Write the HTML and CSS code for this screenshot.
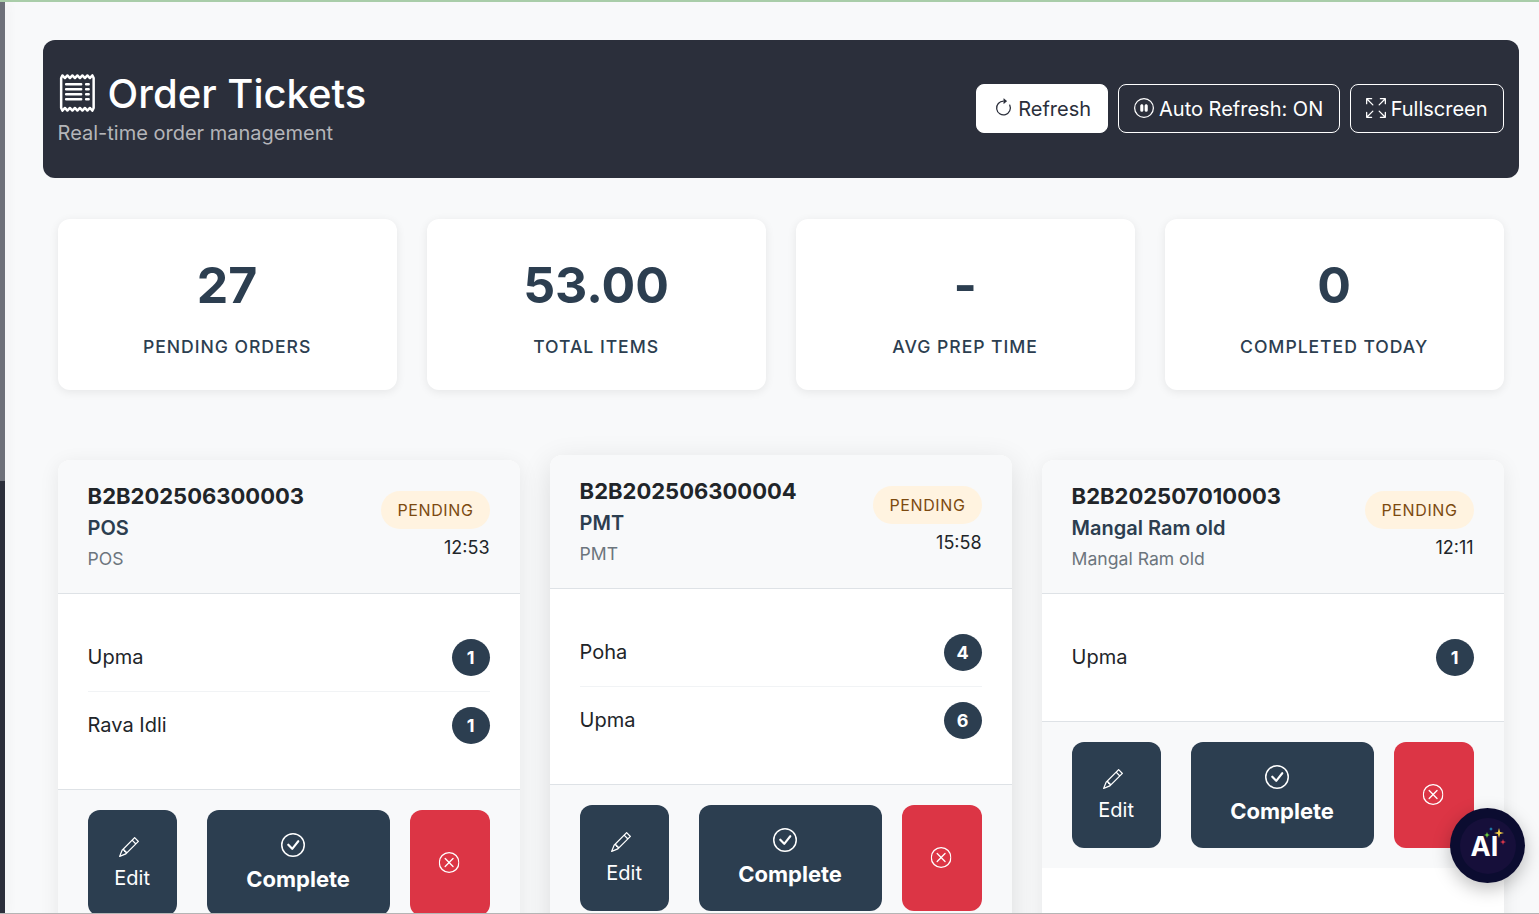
FILE: index.html
```html
<!DOCTYPE html>
<html lang="en">
<head>
<meta charset="utf-8">
<title>Order Tickets</title>
<link rel="stylesheet" href="styles.css">
</head>
<body>
<svg class="defs" width="0" height="0" aria-hidden="true">
  <symbol id="i-pencil" viewBox="0 0 16 16"><path d="M12.146.146a.5.5 0 0 1 .708 0l3 3a.5.5 0 0 1 0 .708l-10 10a.5.5 0 0 1-.168.11l-5 2a.5.5 0 0 1-.65-.65l2-5a.5.5 0 0 1 .11-.168l10-10zM11.207 2.5 13.5 4.793 14.793 3.5 12.5 1.207 11.207 2.5zm1.586 3L10.5 3.207 4 9.707V10h.5a.5.5 0 0 1 .5.5v.5h.5a.5.5 0 0 1 .5.5v.5h.293l6.5-6.5zm-9.761 5.175-.106.106-1.528 3.821 3.821-1.528.106-.106A.5.5 0 0 1 5 12.5V12h-.5a.5.5 0 0 1-.5-.5V11h-.5a.5.5 0 0 1-.468-.325z"/></symbol>
  <symbol id="i-check" viewBox="0 0 16 16"><path d="M8 15A7 7 0 1 1 8 1a7 7 0 0 1 0 14zm0 1A8 8 0 1 0 8 0a8 8 0 0 0 0 16z"/><path d="M10.970 4.970a.235.235 0 0 0-.02.022L7.477 9.417 5.384 7.323a.75.75 0 0 0-1.060 1.060L6.970 11.030a.75.75 0 0 0 1.079-.02l3.992-4.990a.75.75 0 0 0-1.071-1.050z"/></symbol>
  <symbol id="i-x" viewBox="0 0 16 16"><path d="M8 15A7 7 0 1 1 8 1a7 7 0 0 1 0 14zm0 1A8 8 0 1 0 8 0a8 8 0 0 0 0 16z"/><path d="M4.646 4.646a.5.5 0 0 1 .708 0L8 7.293l2.646-2.647a.5.5 0 0 1 .708.708L8.707 8l2.647 2.646a.5.5 0 0 1-.708.708L8 8.707l-2.646 2.647a.5.5 0 0 1-.708-.708L7.293 8 4.646 5.354a.5.5 0 0 1 0-.708z"/></symbol>
</svg>
<div class="topline"></div>
<div class="frame">
  <div class="strip"><div class="strip-top"></div><div class="strip-bottom"></div></div>
  <main class="main">
    <header class="hero">
      <div class="hero-text">
        <h1 class="hero-title">
          <svg class="hero-icon" viewBox="0 0 16 16"><path d="M1.920.506a.5.5 0 0 1 .434.14L3 1.293l.646-.647a.5.5 0 0 1 .708 0L5 1.293l.646-.647a.5.5 0 0 1 .708 0L7 1.293l.646-.647a.5.5 0 0 1 .708 0L9 1.293l.646-.647a.5.5 0 0 1 .708 0l.646.647.646-.647a.5.5 0 0 1 .708 0l.646.647.646-.647a.5.5 0 0 1 .801.13l.5 1A.5.5 0 0 1 15 2v12a.5.5 0 0 1-.053.224l-.5 1a.5.5 0 0 1-.8.13L13 14.707l-.646.647a.5.5 0 0 1-.708 0L11 14.707l-.646.647a.5.5 0 0 1-.708 0L9 14.707l-.646.647a.5.5 0 0 1-.708 0L7 14.707l-.646.647a.5.5 0 0 1-.708 0L5 14.707l-.646.647a.5.5 0 0 1-.708 0L3 14.707l-.646.647a.5.5 0 0 1-.801-.13l-.5-1A.5.5 0 0 1 1 14V2a.5.5 0 0 1 .053-.224l.5-1a.5.5 0 0 1 .367-.27zm.217 1.338L2 2.118v11.764l.137.274.51-.51a.5.5 0 0 1 .707 0l.646.647.646-.646a.5.5 0 0 1 .708 0l.646.646.646-.646a.5.5 0 0 1 .708 0l.646.646.646-.646a.5.5 0 0 1 .708 0l.646.646.646-.646a.5.5 0 0 1 .708 0l.646.646.646-.646a.5.5 0 0 1 .708 0l.509.509.137-.274V2.118l-.137-.274-.51.51a.5.5 0 0 1-.707 0L12 1.707l-.646.647a.5.5 0 0 1-.708 0L10 1.707l-.646.647a.5.5 0 0 1-.708 0L8 1.707l-.646.647a.5.5 0 0 1-.708 0L6 1.707l-.646.647a.5.5 0 0 1-.708 0L4 1.707l-.646.647a.5.5 0 0 1-.708 0l-.509-.51z"/><path d="M3 4.500a.5.5 0 0 1 .5-.5h6a.5.5 0 1 1 0 1h-6a.5.5 0 0 1-.5-.5zm0 2a.5.5 0 0 1 .5-.5h6a.5.5 0 1 1 0 1h-6a.5.5 0 0 1-.5-.5zm0 2a.5.5 0 0 1 .5-.5h6a.5.5 0 1 1 0 1h-6a.5.5 0 0 1-.5-.5zm0 2a.5.5 0 0 1 .5-.5h6a.5.5 0 0 1 0 1h-6a.5.5 0 0 1-.5-.5zm8-6a.5.5 0 0 1 .5-.5h1a.5.5 0 0 1 0 1h-1a.5.5 0 0 1-.5-.5zm0 2a.5.5 0 0 1 .5-.5h1a.5.5 0 0 1 0 1h-1a.5.5 0 0 1-.5-.5zm0 2a.5.5 0 0 1 .5-.5h1a.5.5 0 0 1 0 1h-1a.5.5 0 0 1-.5-.5zm0 2a.5.5 0 0 1 .5-.5h1a.5.5 0 0 1 0 1h-1a.5.5 0 0 1-.5-.5z"/></svg>
          <span>Order Tickets</span>
        </h1>
        <p class="hero-sub">Real-time order management</p>
      </div>
      <div class="hero-actions">
        <button class="hbtn hbtn-light"><svg class="hbtn-icon hbtn-icon-refresh" viewBox="0 0 16 16"><path fill-rule="evenodd" d="M8 3a5 5 0 1 0 4.546 2.914.5.5 0 0 1 .908-.417A6 6 0 1 1 8 2v1z"/><path d="M8 4.466V.534a.25.25 0 0 1 .41-.192l2.360 1.966c.12.1.12.284 0 .384L8.410 4.658A.25.25 0 0 1 8 4.466z"/></svg><span>Refresh</span></button>
        <button class="hbtn hbtn-outline hbtn-auto"><svg class="hbtn-icon" viewBox="0 0 16 16"><path d="M8 15A7 7 0 1 1 8 1a7 7 0 0 1 0 14zm0 1A8 8 0 1 0 8 0a8 8 0 0 0 0 16z"/><path d="M6.250 5C5.560 5 5 5.560 5 6.250v3.500a1.250 1.250 0 1 0 2.500 0v-3.500C7.500 5.560 6.940 5 6.250 5zm3.500 0c-.69 0-1.250.56-1.250 1.250v3.500a1.250 1.250 0 1 0 2.500 0v-3.500C11 5.560 10.440 5 9.750 5z"/></svg><span>Auto Refresh: ON</span></button>
        <button class="hbtn hbtn-outline hbtn-full"><svg class="hbtn-icon" viewBox="0 0 16 16"><path fill-rule="evenodd" d="M5.828 10.172a.5.5 0 0 0-.707 0l-4.096 4.096V11.500a.5.5 0 0 0-1 0v3.975a.5.5 0 0 0 .5.5H4.500a.5.5 0 0 0 0-1H1.732l4.096-4.096a.5.5 0 0 0 0-.707zm4.344 0a.5.5 0 0 1 .707 0l4.096 4.096V11.500a.5.5 0 1 1 1 0v3.975a.5.5 0 0 1-.5.5H11.500a.5.5 0 0 1 0-1h2.768l-4.096-4.096a.5.5 0 0 1 0-.707zm0-4.344a.5.5 0 0 0 .707 0l4.096-4.096V4.500a.5.5 0 1 0 1 0V.525a.5.5 0 0 0-.5-.5H11.500a.5.5 0 0 0 0 1h2.768l-4.096 4.096a.5.5 0 0 0 0 .707zm-4.344 0a.5.5 0 0 1-.707 0L1.025 1.732V4.500a.5.5 0 0 1-1 0V.525a.5.5 0 0 1 .5-.5H4.500a.5.5 0 0 1 0 1H1.732l4.096 4.096a.5.5 0 0 1 0 .707z"/></svg><span>Fullscreen</span></button>
      </div>
    </header>

    <section class="stats">
      <div class="stat"><div class="stat-num">27</div><div class="stat-label">Pending Orders</div></div>
      <div class="stat"><div class="stat-num">53.00</div><div class="stat-label">Total Items</div></div>
      <div class="stat"><div class="stat-num">-</div><div class="stat-label">Avg Prep Time</div></div>
      <div class="stat"><div class="stat-num">0</div><div class="stat-label">Completed Today</div></div>
    </section>

    <section class="tickets">
      <article class="ticket">
        <div class="ticket-head">
          <div class="ticket-info">
            <div class="ticket-id">B2B202506300003</div>
            <div class="ticket-customer">POS</div>
            <div class="ticket-source">POS</div>
          </div>
          <div class="ticket-meta"><span class="pill">PENDING</span><span class="time">12:53</span></div>
        </div>
        <div class="ticket-body">
          <div class="item"><span class="item-name">Upma</span><span class="qty">1</span></div>
          <div class="item"><span class="item-name">Rava Idli</span><span class="qty">1</span></div>
        </div>
        <div class="ticket-foot">
          <button class="act act-edit"><svg class="act-icon act-icon-edit"><use href="#i-pencil"/></svg><span class="act-text">Edit</span></button>
          <button class="act act-done"><svg class="act-icon act-icon-done"><use href="#i-check"/></svg><span class="act-text">Complete</span></button>
          <button class="act act-del" aria-label="Cancel"><svg class="act-icon act-icon-del"><use href="#i-x"/></svg></button>
        </div>
      </article>

      <article class="ticket ticket-raised">
        <div class="ticket-head">
          <div class="ticket-info">
            <div class="ticket-id">B2B202506300004</div>
            <div class="ticket-customer">PMT</div>
            <div class="ticket-source">PMT</div>
          </div>
          <div class="ticket-meta"><span class="pill">PENDING</span><span class="time">15:58</span></div>
        </div>
        <div class="ticket-body">
          <div class="item"><span class="item-name">Poha</span><span class="qty">4</span></div>
          <div class="item"><span class="item-name">Upma</span><span class="qty">6</span></div>
        </div>
        <div class="ticket-foot">
          <button class="act act-edit"><svg class="act-icon act-icon-edit"><use href="#i-pencil"/></svg><span class="act-text">Edit</span></button>
          <button class="act act-done"><svg class="act-icon act-icon-done"><use href="#i-check"/></svg><span class="act-text">Complete</span></button>
          <button class="act act-del" aria-label="Cancel"><svg class="act-icon act-icon-del"><use href="#i-x"/></svg></button>
        </div>
      </article>

      <article class="ticket">
        <div class="ticket-head">
          <div class="ticket-info">
            <div class="ticket-id">B2B202507010003</div>
            <div class="ticket-customer">Mangal Ram old</div>
            <div class="ticket-source">Mangal Ram old</div>
          </div>
          <div class="ticket-meta"><span class="pill">PENDING</span><span class="time">12:11</span></div>
        </div>
        <div class="ticket-body">
          <div class="item"><span class="item-name">Upma</span><span class="qty">1</span></div>
        </div>
        <div class="ticket-foot">
          <button class="act act-edit"><svg class="act-icon act-icon-edit"><use href="#i-pencil"/></svg><span class="act-text">Edit</span></button>
          <button class="act act-done"><svg class="act-icon act-icon-done"><use href="#i-check"/></svg><span class="act-text">Complete</span></button>
          <button class="act act-del" aria-label="Cancel"><svg class="act-icon act-icon-del"><use href="#i-x"/></svg></button>
        </div>
      </article>
    </section>
  </main>
</div>
<div class="ai-fab">
  <div class="ai-inner">
    <span class="ai-text">AI</span>
    <svg class="ai-sparks" viewBox="0 0 30 24">
      <path fill="#f7d046" d="M17 2l1.100 3.900 3.900 1.100-3.900 1.100L17 12l-1.100-3.900L12 7l3.900-1.100z"/>
      <path fill="#e5394b" d="M21 13l.7 2.300 2.300.7-2.300.7-.7 2.300-.7-2.300-2.300-.7 2.300-.7z"/>
      <path fill="#6fd33c" d="M5 6l.8 2.200 2.200.8-2.200.8-.8 2.200-.8-2.200-2.200-.8 2.200-.8z"/>
      <path fill="#1fa8d8" d="M9 1l.5 1.500L11 3l-1.500.5L9 5l-.5-1.500L7 3l1.500-.5z"/>
    </svg>
  </div>
</div>
<div class="bottomline"></div>
</body>
</html>
```
FILE: styles.css
```css
* { box-sizing: border-box; }
html, body { height: 914px; }
body {
  margin: 0;
  overflow: hidden;
  background: #f8f9fa;
  color: #212529;
  font-family: "Inter", "Liberation Sans", sans-serif;
  display: flex;
  flex-direction: column;
}
.defs { position: absolute; }
svg { fill: currentColor; display: block; }
.topline { height: 2px; background: #a9cda9; flex: none; }
.frame { flex: 1; display: flex; min-height: 0; }
.strip { width: 5px; flex: none; display: flex; flex-direction: column; box-shadow: 4px 0 10px rgba(0,0,0,.04); }
.strip-top { height: 479px; background: #6d7079; }
.strip-bottom { flex: 1; background: #2b2f3b; }
.main { flex: 1; min-width: 0; padding: 38px 20.4px 0 37.6px; overflow: hidden; }

.hero {
  height: 138px;
  background: #2b2f3b;
  border-radius: 12px;
  padding: 0 15px;
  display: flex;
  align-items: center;
  justify-content: space-between;
  color: #fff;
}
.hero-title { margin: 0; font-size: 40px; font-weight: 500; line-height: 48px; display: flex; align-items: center; gap: 10px; }
.hero-icon { width: 40px; height: 40px; transform: translate(-.6px, -1px); }
.hero-sub { margin: 0; font-size: 20px; line-height: 30px; color: #b4b5b9; }
.hero-actions { display: flex; gap: 10px; margin-bottom: 2px; }
.hbtn {
  height: 49px;
  border-radius: 8px;
  font: 400 20px/1 "Inter", sans-serif;
  display: flex;
  align-items: center;
  justify-content: center;
  gap: 5px;
  padding: 2px 0 0;
  border: 1px solid #fff;
}
.hbtn-light { width: 132px; background: #fff; color: #2b2f3b; gap: 6px; }
.hbtn-outline { background: transparent; color: #fff; }
.hbtn-auto { width: 222px; }
.hbtn-full { width: 154px; gap: 5px; }
.hbtn-icon { width: 20px; height: 20px; flex: none; transform: translateY(-1px); }
.hbtn-icon-refresh { transform: translate(1.5px, -1px); }

.stats { margin: 41px 15px 0; display: grid; grid-template-columns: repeat(4, 1fr); gap: 30px; }
.stat {
  height: 171px;
  background: #fff;
  border-radius: 12px;
  box-shadow: 0 2px 10px rgba(0,0,0,.08);
  text-align: center;
  padding-top: 36px;
  color: #2c3e50;
}
.stat-num { font-size: 50px; font-weight: 700; line-height: 60px; }
.stat-label { margin-top: 18px; font-size: 17.6px; font-weight: 500; line-height: 27px; letter-spacing: .96px; text-transform: uppercase; }

.tickets { margin: 70px 15px 0; display: grid; grid-template-columns: repeat(3, 1fr); gap: 30px; align-items: stretch; height: 520px; }
.ticket {
  background: #fff;
  border-radius: 12px 12px 0 0;
  box-shadow: 0 4px 20px rgba(0,0,0,.08);
  display: flex;
  flex-direction: column;
  overflow: hidden;
}
.ticket-raised { transform: translateY(-5px); box-shadow: 0 8px 30px rgba(0,0,0,.12); }
.ticket-head {
  height: 134px;
  flex: none;
  background: #f8f9fa;
  border-bottom: 1px solid #dee2e6;
  padding: 21px 30px 0;
  display: flex;
  justify-content: space-between;
}
.ticket-id { font-size: 22px; font-weight: 700; line-height: 31px; color: #212529; }
.ticket-customer { font-size: 20px; font-weight: 600; line-height: 32px; color: #2c3e50; }
.ticket-source { font-size: 17.6px; line-height: 30px; color: #6c757d; }
.ticket-meta { display: flex; flex-direction: column; align-items: flex-end; padding-top: 10px; }
.pill {
  height: 38px;
  border-radius: 19px;
  background: #fff3e0;
  color: #7c4a10;
  padding: 0 16px;
  font-size: 16px;
  line-height: 38px;
  font-weight: 400;
  letter-spacing: .64px;
}
.time { margin-top: 5px; font-size: 18px; line-height: 27px; color: #212529; }

.ticket-body { padding: 30px 30px 30px; }
.item { display: flex; align-items: center; justify-content: space-between; padding: 15px 0; height: 68px; border-bottom: 1px solid #f1f3f5; }
.item:last-child { border-bottom: 0; height: 67px; }
.item-name { font-size: 20px; font-weight: 400; color: #212529; padding-bottom: 2px; }
.qty {
  width: 38px; height: 37px;
  border-radius: 50%;
  background: #2c3e50;
  color: #fff;
  font-size: 18px;
  font-weight: 700;
  display: flex; align-items: center; justify-content: center;
}
.ticket-foot {
  flex: none;
  background: #f8f9fa;
  border-top: 1px solid #dee2e6;
  padding: 20px 30px;
  display: flex;
  justify-content: space-between;
}
.act {
  height: 106px;
  border: 0;
  border-radius: 12px;
  color: #fff;
  padding: 0;
  display: flex;
  flex-direction: column;
  align-items: center;
  justify-content: center;
  font-family: "Inter", sans-serif;
}
.act-edit { width: 89px; background: #2c3e50; font-size: 20px; font-weight: 400; padding-top: 2px; }
.act-done { width: 183px; background: #2c3e50; font-size: 22px; font-weight: 700; margin-left: 30px; margin-right: 20px; }
.act-del { width: 80px; background: #dc3545; }
.act-icon { width: 22px; height: 22px; }
.act-icon-edit { width: 20px; height: 20px; margin-bottom: 8px; transform: translate(-3px, 2px); }
.act-icon-done { width: 24px; height: 24px; margin-bottom: 8px; transform: translate(-5px, 1px); }
.act-icon-del { width: 21px; height: 21px; transform: translate(-.4px, -1px); }
.act-text { line-height: 30px; }

.ai-fab {
  position: fixed;
  left: 1450px;
  top: 808px;
  width: 75px;
  height: 75px;
  border-radius: 50%;
  background: #0b0c30;
  box-shadow: 0 6px 18px rgba(0,0,0,.25);
  display: flex;
  align-items: center;
  justify-content: center;
}
.ai-inner {
  position: relative;
  width: 56px;
  height: 56px;
  border-radius: 50%;
  background: #160f3a;
}
.ai-text {
  position: absolute;
  left: 11px;
  top: 15px;
  color: #fff;
  font-size: 27px;
  font-weight: 700;
  line-height: 28px;
}
.ai-sparks { position: absolute; left: 22px; top: 8px; width: 30px; height: 24px; }
.bottomline { position: fixed; left: 0; right: 0; bottom: 0; height: 1px; background: #b5b5b5; }
```
